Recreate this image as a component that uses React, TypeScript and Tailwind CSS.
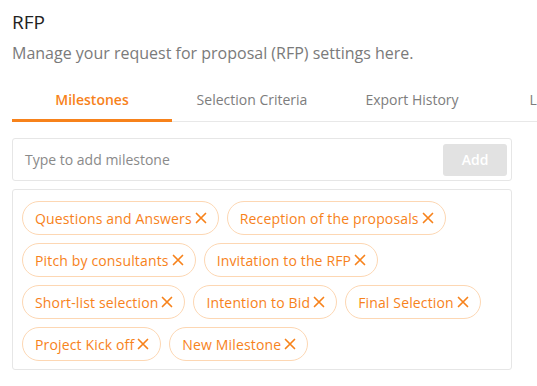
const tabs = ["Milestones", "Selection Criteria", "Export History", "Last Updates"];

const milestones = [
  "Questions and Answers",
  "Reception of the proposals",
  "Pitch by consultants",
  "Invitation to the RFP",
  "Short-list selection",
  "Intention to Bid",
  "Final Selection",
  "Project Kick off",
  "New Milestone",
];

const CloseIcon = () => (
  <svg width="12" height="12" viewBox="0 0 12 12" className="shrink-0">
    <path d="M1.5 1.5L10.5 10.5M10.5 1.5L1.5 10.5" stroke="currentColor" strokeWidth="1.7" strokeLinecap="round" />
  </svg>
);

export default function App() {
  return (
    <div
      className="w-[537px] h-[386px] overflow-hidden bg-white pl-3 pt-[10px]"
      style={{ fontFamily: '"Open Sans", sans-serif' }}
    >
      <h1 className="text-[19px] leading-6 text-[#222]">RFP</h1>
      <p className="mt-2 text-[16px] leading-[22px] text-[#7a7a7a]">
        Manage your request for proposal (RFP) settings here.
      </p>

      <div className="mt-[17px] flex border-b border-[#e8e8e8] whitespace-nowrap">
        {tabs.map((t, i) => (
          <div
            key={t}
            className={
              i === 0
                ? "w-40 shrink-0 text-center text-[14px] leading-[37px] font-semibold text-[#f7821b] border-b-[3px] border-[#f7821b] -mb-px"
                : "w-40 shrink-0 text-center text-[14px] leading-[37px] text-[#7d7d7d] pb-[3px]"
            }
          >
            {t}
          </div>
        ))}
      </div>

      <div className="mt-[16px] w-[500px] h-[43px] flex items-center justify-between border border-[#e6e6e6] rounded-[3px] pl-3 pr-1">
        <span className="text-[14px] text-[#8a8a8a]">Type to add milestone</span>
        <button className="w-16 h-8 rounded-[3px] bg-[#e2e2e2] text-white text-[14px] font-semibold">
          Add
        </button>
      </div>

      <div className="mt-2 w-[500px] h-[181px] border border-[#e6e6e6] rounded-[3px] pl-[9px] pt-[11px] pr-2 flex flex-wrap content-start gap-2">
        {milestones.map((m) => (
          <div
            key={m}
            className="h-[34px] flex items-center gap-[3px] pl-[12px] pr-[11px] rounded-full border border-[#fdd7b3] text-[#f7821b] text-[14px] font-medium tracking-[0.15px]"
          >
            <span>{m}</span>
            <CloseIcon />
          </div>
        ))}
      </div>
    </div>
  );
}
